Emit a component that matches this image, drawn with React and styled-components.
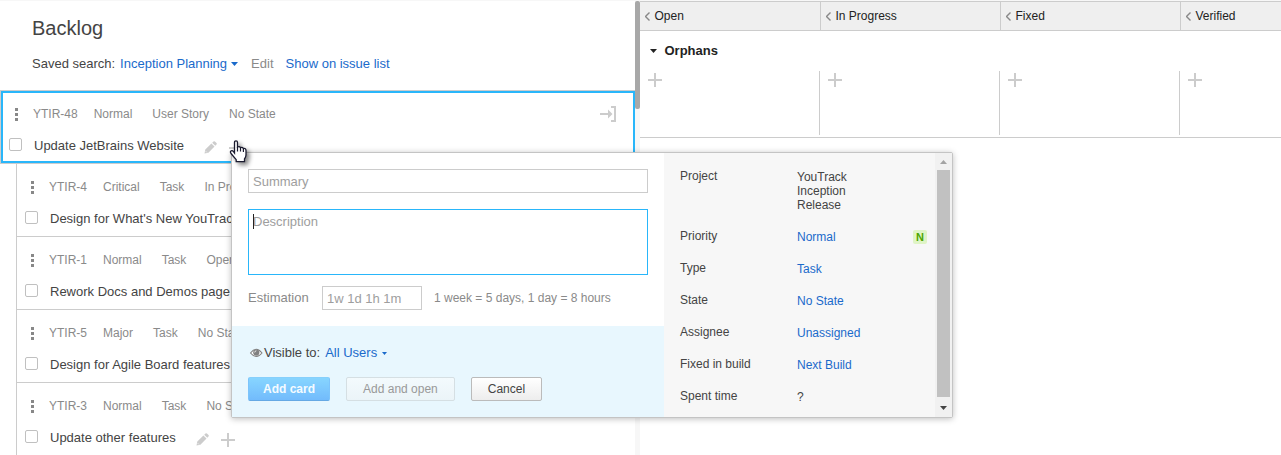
import React from "react";
import styled, { createGlobalStyle, css } from "styled-components";

const color = {
  text: "#444",
  muted: "#8a8a8a",
  link: "#1a6acb",
  line: "#ccc",
  active: "#29b6fa",
  icon: "#ccc",
};

const GlobalStyle = createGlobalStyle`
  *, *::before, *::after { box-sizing: border-box; }
  body {
    margin: 0;
    background: #fff;
    color: ${color.text};
    font: 13px/16px "Liberation Sans", Arial, sans-serif;
  }
  button, input, textarea, select { font: inherit; color: inherit; margin: 0; }
`;

const Page = styled.div`
  position: relative;
  display: flex;
  height: 100vh;
  overflow: hidden;
  border-top: 1px solid #f7f7f7;
`;

/* Backlog */

const Backlog = styled.section`
  flex: 0 0 calc(50% - 6px);
  min-width: 0;
`;

const BacklogHeader = styled.header`
  padding: 15px 32px 0;
  height: 89px;
`;

const Title = styled.h1`
  margin: 0 0 16px;
  font-size: 20px;
  line-height: 24px;
  font-weight: 400;
`;

const SearchLine = styled.div`
  display: flex;
  align-items: center;
  white-space: nowrap;
`;

const Link = styled.a`
  color: ${(p) => (p.$muted ? color.muted : color.link)};
  text-decoration: none;
`;

const SearchLink = styled(Link)`
  margin-left: ${(p) => (p.$muted ? 13 : 12)}px;
`;

const PickerSelect = styled.select`
  appearance: none;
  border: 0;
  padding: 0;
  margin: 0 4px 0 5px;
  background: none;
  color: ${color.link};
  line-height: 16px;
`;

const Caret = styled.svg`
  display: block;
  flex: none;
  fill: ${(p) => p.$fill || color.link};
`;

const CardList = styled.ul`
  list-style: none;
  margin: 0;
  padding: 0;
`;

const Card = styled.li`
  height: 73px;
  margin-left: ${(p) => (p.$selected ? 0 : 16)}px;
  border-left: 1px solid ${color.line};
  border-bottom: 1px solid ${color.line};
  ${(p) =>
    p.$selected &&
    css`
      height: 74px;
      border-top: 1px solid ${color.line};
    `}
`;

const CardBody = styled.div`
  display: flex;
  flex-direction: column;
  gap: 16px;
  height: 72px;
  padding: 15px 16px 0 8px;
  ${(p) =>
    p.$selected &&
    css`
      padding: 13px 16px 0 6px;
      border: 2px solid ${color.active};
    `}
`;

const CardLine = styled.div`
  display: flex;
  align-items: center;
  height: 16px;
  white-space: nowrap;
`;

const DragHandle = styled.svg`
  width: 16px;
  height: 16px;
  margin-right: 8px;
  fill: #888;
`;

const CardId = styled.span`
  margin-right: 16px;
  font-size: 12px;
  color: ${color.muted};
`;

const CardField = styled.span`
  margin-right: 20px;
  font-size: 12px;
  color: ${color.muted};
`;

const IconButton = styled.button`
  display: flex;
  border: 0;
  padding: 0;
  background: none;
  color: ${color.icon};
  ${(p) => p.$end && "margin-left: auto;"}
`;

const CardActions = styled.div`
  display: flex;
  align-items: center;
  gap: 12px;
  margin-left: 20px;
  padding-top: 3px;
`;

const CheckLabel = styled.label`
  display: flex;
  align-items: center;
`;

const Check = styled.input`
  appearance: none;
  width: 13px;
  height: 13px;
  margin: 0 12px 4px 0;
  border: 1px solid #c0c0c0;
  border-radius: 2px;
  background: #fff;
`;

const SplitTrack = styled.div`
  flex: 0 0 5px;
  background: #f7f7f7;
`;

const SplitThumb = styled.div`
  height: 108px;
  border-radius: 2px;
  background: #a8a8a8;
`;

/* Board */

const Board = styled.section`
  flex: 1;
  min-width: 0;
  overflow: hidden;
  color: #222;
`;

const BoardGrid = styled.div`
  display: grid;
  grid-template-columns: repeat(3, 180px) minmax(180px, 1fr);
`;

const HeaderRow = styled(BoardGrid)`
  border: solid ${color.line};
  border-width: 1px 0;
  background: #efefef;
`;

const ColumnHeader = styled.button`
  display: flex;
  align-items: center;
  gap: 5px;
  height: 28px;
  padding: 0 5px;
  border: 0;
  background: none;
  font-size: 12px;
  & + & {
    border-left: 1px solid ${color.line};
  }
`;

const Swimlane = styled.h2`
  display: flex;
  align-items: center;
  gap: 8px;
  height: 40px;
  margin: 0;
  padding-left: 10px;
  font-size: 13px;
`;

const CellRow = styled(BoardGrid)`
  padding-bottom: 2px;
  border-bottom: 1px solid ${color.line};
`;

const Cell = styled.div`
  height: 64px;
  padding: 2px 8px;
  border-right: 1px solid ${color.line};
`;

/* New card dialog */

const Dialog = styled.form`
  position: absolute;
  left: 231px;
  top: 151px;
  display: flex;
  width: 722px;
  border: 1px solid #c4c4c4;
  border-radius: 2px;
  background: #fff;
  box-shadow: 0 1px 6px rgba(0, 0, 0, 0.25);
`;

const DialogMain = styled.div`
  flex: 1;
  display: flex;
  flex-direction: column;
`;

const Fields = styled.div`
  display: flex;
  flex-direction: column;
  padding: 16px;
`;

const fieldStyle = css`
  display: block;
  width: 100%;
  border: 1px solid ${color.line};
  border-radius: 0;
  padding: 4px;
  background: #fff;
  line-height: 16px;
  outline: 0;
  &::placeholder {
    color: #9e9e9e;
    opacity: 1;
  }
`;

const TextField = styled.input`
  ${fieldStyle}
  height: 24px;
  width: ${(p) => (p.$short ? "100px" : "100%")};
`;

const DescriptionBox = styled.div`
  position: relative;
  margin: 16px 0 11px;
`;

const TextArea = styled.textarea`
  ${fieldStyle}
  height: 66px;
  resize: none;
  border: 1px solid ${color.active};
`;

const TextCursor = styled.span`
  position: absolute;
  left: 5px;
  top: 5px;
  width: 1px;
  height: 15px;
  background: #222;
`;

const EstimationRow = styled.div`
  display: flex;
  align-items: center;
`;

const EstimationLabel = styled.label`
  width: 74px;
  color: ${color.muted};
`;

const Hint = styled.span`
  margin-left: 12px;
  font-size: 12px;
  color: ${color.muted};
`;

const DialogFooter = styled.div`
  display: flex;
  flex-direction: column;
  gap: 14px;
  padding: 17px 16px 16px;
  background: #e8f7fe;
`;

const Visibility = styled.label`
  display: flex;
  align-items: center;
  height: 20px;
`;

const ButtonRow = styled.div`
  display: flex;
  gap: 16px;
`;

const Button = styled.button`
  height: 24px;
  padding: 0 16px;
  border: 1px solid #bbb;
  border-radius: 2px;
  background: linear-gradient(#fff, #ededed);
  font-size: 12px;
  line-height: 16px;
  &:disabled {
    border-color: #d5dfe3;
    background: linear-gradient(#f3fafd, #ebf4f8);
    color: #999;
  }
  ${(p) =>
    p.$primary &&
    css`
      padding: 0 14px;
      font-weight: 700;
      &:disabled {
        border-color: #87d0fc #7cc4fb #66a9e4;
        background: linear-gradient(#87d5ff, #72bbfc);
        color: #f4fbff;
      }
    `}
`;

const Properties = styled.dl`
  flex: 0 0 271px;
  display: flex;
  flex-direction: column;
  gap: 18px;
  margin: 0;
  padding: 17px 8px 0 16px;
  background: #f7f7f7;
  font-size: 12px;
  line-height: 14px;
`;

const Property = styled.div`
  display: grid;
  grid-template-columns: 117px 80px 1fr;
`;

const PropertyName = styled.dt`
  line-height: 12px;
`;

const PropertyValue = styled.dd`
  margin: 0;
`;

const Badge = styled.dd`
  justify-self: end;
  width: 14px;
  height: 14px;
  margin: 0;
  border-radius: 2px;
  background: #dff4c6;
  color: #4da400;
  font-size: 11px;
  font-weight: 700;
  text-align: center;
`;

const ScrollTrack = styled.div`
  flex: 0 0 17px;
  display: flex;
  flex-direction: column;
  align-items: center;
  background: #f1f1f1;
`;

const ScrollThumb = styled.div`
  flex: 1;
  width: 13px;
  background: #c1c1c1;
`;

const HandPointer = styled.svg`
  position: absolute;
  left: 227px;
  top: 137px;
  filter: drop-shadow(3px 3px 2px rgba(0, 0, 0, 0.45));
`;

const CaretDown = ({ size = 7, fill }) => (
  <Caret width={size} height={size === 7 ? 4 : 3} viewBox="0 0 7 4" $fill={fill} aria-hidden="true">
    <path d="M0 0h7L3.5 4z" />
  </Caret>
);

const PlusIcon = () => (
  <svg width="14" height="14" viewBox="0 0 14 14" fill="currentColor" aria-hidden="true">
    <path d="M6 0h2v6h6v2H8v6H6V8H0V6h6z" />
  </svg>
);

const PencilIcon = () => (
  <svg width="13" height="13" viewBox="0 0 13 13" fill="currentColor" aria-hidden="true">
    <path d="M0.5 12.5L1.3 8.6 7.4 2.5l3.1 3.1-6.1 6.1zM8.2 1.7L9.5.5q.7-.6 1.4 0l1.6 1.6q.6.7 0 1.4l-1.2 1.3z" />
    <path d="M1.700 10.200l1.200 1.200" stroke="#fff" strokeWidth=".7" />
  </svg>
);

const MoveIcon = () => (
  <svg width="17" height="16" viewBox="0 0 17 16" fill="currentColor" aria-hidden="true">
    <path d="M0 7h8V3.5l4.500 4.500L8 12.500V9H0zM11 0h5v16h-5v-2h3V2h-3z" />
  </svg>
);

const ChevronIcon = () => (
  <svg width="5" height="9" viewBox="0 0 5 9" fill="none" stroke="#888" strokeWidth="1.4" aria-hidden="true">
    <path d="M4.5.5l-4 4 4 4" />
  </svg>
);

const EyeIcon = () => (
  <svg width="16" height="10" viewBox="0 0 16 10" aria-hidden="true">
    <path d="M2.500 5Q8.300-2.500 14 5 8.300 12 2.500 5z" fill="#fff" stroke="#808080" strokeWidth="1.100" />
    <circle cx="8.300" cy="4.600" r="3.100" fill="#808080" />
    <path d="M6.700 4.500a1.700 1.700 0 0 1 1.600-1.700" fill="none" stroke="#fff" strokeWidth=".8" />
  </svg>
);

const ScrollArrow = ({ up }) => (
  <svg width="17" height={up ? 17 : 20} viewBox={up ? "0 0 17 17" : "0 0 17 20"} aria-hidden="true">
    {up ? <path d="M5 11h7L8.500 7z" fill="#a3a3a3" /> : <path d="M5 9h7l-3.500 4z" fill="#444" />}
  </svg>
);

const cards = [
  { id: "YTIR-48", fields: ["Normal", "User Story", "No State"], title: "Update JetBrains Website", selected: true, actions: true },
  { id: "YTIR-4", fields: ["Critical", "Task", "In Progress"], title: "Design for What's New YouTrack" },
  { id: "YTIR-1", fields: ["Normal", "Task", "Open"], title: "Rework Docs and Demos page" },
  { id: "YTIR-5", fields: ["Major", "Task", "No State"], title: "Design for Agile Board features" },
  { id: "YTIR-3", fields: ["Normal", "Task", "No State"], title: "Update other features", actions: true },
];

const columns = ["Open", "In Progress", "Fixed", "Verified"];

const properties = [
  { name: "Project", value: "YouTrack Inception Release", plain: true },
  { name: "Priority", value: "Normal", badge: "N" },
  { name: "Type", value: "Task" },
  { name: "State", value: "No State" },
  { name: "Assignee", value: "Unassigned" },
  { name: "Fixed in build", value: "Next Build" },
  { name: "Spent time", value: "?", plain: true },
];

function BacklogCard({ id, fields, title, selected, actions }) {
  return (
    <Card $selected={selected}>
      <CardBody $selected={selected}>
        <CardLine>
          <DragHandle viewBox="0 0 16 16" aria-hidden="true">
            <path d="M6 2h3v3H6zM6 7h3v3H6zM6 12h3v3H6z" />
          </DragHandle>
          <CardId>{id}</CardId>
          {fields.map((field) => (
            <CardField key={field}>{field}</CardField>
          ))}
          {selected && (
            <IconButton type="button" $end aria-label="Move to board">
              <MoveIcon />
            </IconButton>
          )}
        </CardLine>
        <CardLine>
          <CheckLabel>
            <Check type="checkbox" />
            {title}
          </CheckLabel>
          {actions && (
            <CardActions>
              <IconButton type="button" aria-label="Edit card">
                <PencilIcon />
              </IconButton>
              <IconButton type="button" aria-label="Add subtask">
                <PlusIcon />
              </IconButton>
            </CardActions>
          )}
        </CardLine>
      </CardBody>
    </Card>
  );
}

function NewCardDialog() {
  return (
    <Dialog onSubmit={(e) => e.preventDefault()}>
      <DialogMain>
        <Fields>
          <TextField placeholder="Summary" aria-label="Summary" />
          <DescriptionBox>
            <TextArea placeholder="Description" aria-label="Description" />
            <TextCursor />
          </DescriptionBox>
          <EstimationRow>
            <EstimationLabel htmlFor="estimation">Estimation</EstimationLabel>
            <TextField id="estimation" $short placeholder="1w 1d 1h 1m" />
            <Hint>1 week = 5 days, 1 day = 8 hours</Hint>
          </EstimationRow>
        </Fields>
        <DialogFooter>
          <Visibility>
            <EyeIcon />
            Visible to:
            <PickerSelect>
              <option>All Users</option>
            </PickerSelect>
            <CaretDown size={5} />
          </Visibility>
          <ButtonRow>
            <Button $primary disabled>Add card</Button>
            <Button type="button" disabled>Add and open</Button>
            <Button type="button">Cancel</Button>
          </ButtonRow>
        </DialogFooter>
      </DialogMain>
      <Properties>
        {properties.map(({ name, value, plain, badge }) => (
          <Property key={name}>
            <PropertyName>{name}</PropertyName>
            <PropertyValue>{plain ? value : <Link href="#">{value}</Link>}</PropertyValue>
            {badge && <Badge>{badge}</Badge>}
          </Property>
        ))}
      </Properties>
      <ScrollTrack>
        <ScrollArrow up />
        <ScrollThumb />
        <ScrollArrow />
      </ScrollTrack>
    </Dialog>
  );
}

export default function App() {
  return (
    <Page>
      <GlobalStyle />
      <Backlog>
        <BacklogHeader>
          <Title>Backlog</Title>
          <SearchLine>
            <label htmlFor="saved-search">Saved search:</label>
            <PickerSelect id="saved-search">
              <option>Inception Planning</option>
            </PickerSelect>
            <CaretDown />
            <SearchLink href="#" $muted>Edit</SearchLink>
            <SearchLink href="#">Show on issue list</SearchLink>
          </SearchLine>
        </BacklogHeader>
        <CardList>
          {cards.map((card) => (
            <BacklogCard key={card.id} {...card} />
          ))}
        </CardList>
      </Backlog>
      <SplitTrack>
        <SplitThumb />
      </SplitTrack>
      <Board>
        <HeaderRow>
          {columns.map((name) => (
            <ColumnHeader key={name} type="button">
              <ChevronIcon />
              {name}
            </ColumnHeader>
          ))}
        </HeaderRow>
        <Swimlane>
          <CaretDown fill="#222" />
          Orphans
        </Swimlane>
        <CellRow>
          {columns.map((name) => (
            <Cell key={name}>
              <IconButton type="button" aria-label={`Add card to ${name}`}>
                <PlusIcon />
              </IconButton>
            </Cell>
          ))}
        </CellRow>
      </Board>
      <NewCardDialog />
      <HandPointer width="24" height="26" viewBox="0 0 24 26" aria-hidden="true">
        <path
          d="M7.500 15V4.500q0-1.700 1.500-1.700t1.500 1.700V9q2-1 3 .7 2-.8 2.800.8 2.700-.5 2.700 2v4.500q0 2-1.500 4v2.700H9.200v-2L4 15.500q-1.300-2 .2-2.700 1.300-.5 2.300.8z"
          fill="#fff"
          stroke="#1a1a2e"
          strokeWidth="1.300"
        />
        <path d="M10.500 9v4.500M13.500 10v3.500M16.400 11v3" stroke="#1a1a2e" strokeWidth="1.200" />
      </HandPointer>
    </Page>
  );
}
